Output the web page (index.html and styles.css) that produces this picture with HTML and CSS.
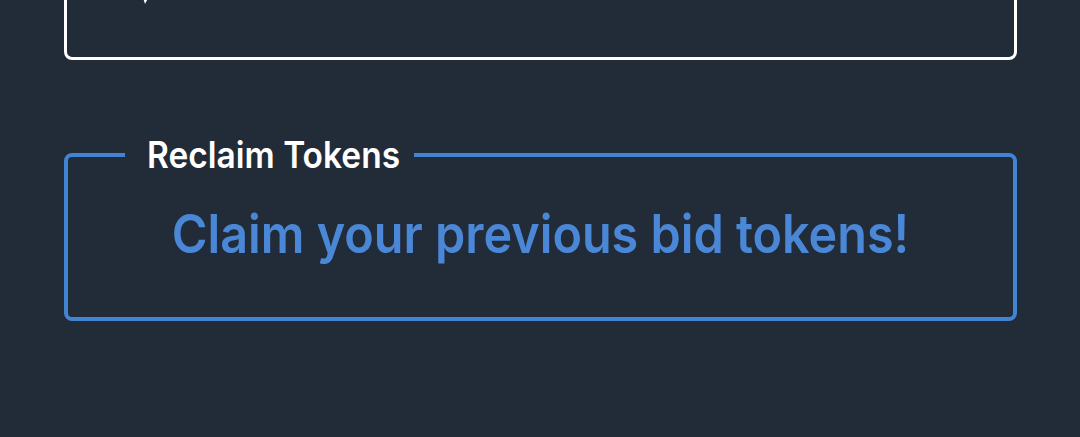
FILE: index.html
```html
<!DOCTYPE html>
<html lang="en">
  <head>
    <meta charset="UTF-8" />
    <meta name="viewport" content="width=device-width, initial-scale=1" />
    <title>Reclaim Tokens</title>
    <link rel="stylesheet" href="styles.css">
  </head>
  <body>
    <main class="page">
      <section class="card">
        <svg class="pointer" width="20" height="20" viewBox="0 0 20 20" aria-hidden="true">
          <path d="M2 0 L18 0 L8 19 Z" fill="#ffffff" />
        </svg>
      </section>

      <fieldset class="reclaim">
        <legend><span class="tall">Reclaim Tokens</span></legend>
        <p class="reclaim-text"><span class="tall">Claim your previous bid tokens!</span></p>
      </fieldset>
    </main>
  </body>
</html>
```

FILE: styles.css
```css
/* Reset */
* {
  margin: 0;
  padding: 0;
  box-sizing: border-box;
}
body,
html {
  height: 100%;
  font-family: Inter, "Noto Sans", sans-serif;
  background-color: #222b38;
  overflow: hidden;
}

.page {
  padding: 0 63px 0 64px;
}

/* Top card (scrolled mostly out of view) */
.card {
  height: 160px;
  margin-top: -100px;
  border: 3px solid #ffffff;
  border-radius: 8px;
  padding-left: 70px;
  display: flex;
  align-items: flex-end;
  padding-bottom: 52px;
}
.pointer {
  display: block;
}

/* Reclaim box */
.reclaim {
  margin-top: 75px;
  border: 4px solid #4084d3;
  border-radius: 8px;
  height: 186px;
  text-align: center;
}
.reclaim legend {
  margin-left: 57px;
  padding: 0 14px 0 22px;
  color: #ffffff;
  font-size: 33.5px;
  line-height: 40px;
  font-weight: 600;
  text-align: left;
}
.reclaim-text {
  margin-top: 31px;
  color: #4a87d6;
  font-size: 48.5px;
  line-height: 56px;
  font-weight: 600;
}

/* the glyphs in this panel are drawn a little taller than they are wide */
.tall {
  display: inline-block;
  transform: scaleY(1.1);
}
```
